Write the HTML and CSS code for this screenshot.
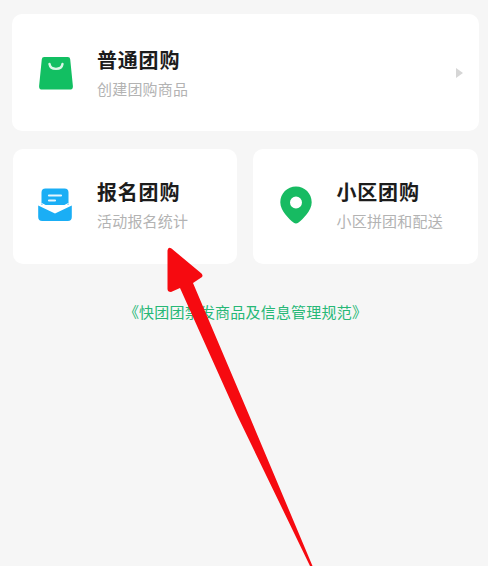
FILE: index.html
```html
<!DOCTYPE html>
<html lang="zh">
<head>
<meta charset="utf-8">
<title>快团团</title>
<link rel="stylesheet" href="styles.css">
</head>
<body>
<main class="page">
  <section class="card card-wide">
    <svg class="icon" viewBox="0 0 34 34" aria-hidden="true">
      <path d="M5.200 1h23.600a2.400 2.400 0 0 1 2.400 2.200L33.900 30a3.400 3.400 0 0 1-3.400 3.600H3.500A3.400 3.400 0 0 1 .1 30L2.800 3.200A2.400 2.400 0 0 1 5.200 1z" fill="#12bf62"/>
      <path d="M10.500 8c1 6.500 12 6.500 13 0" fill="none" stroke="#d9f7e6" stroke-width="2.400" stroke-linecap="round"/>
    </svg>
    <div class="copy">
      <h2 class="title">普通团购</h2>
      <p class="sub">创建团购商品</p>
    </div>
    <span class="chevron"></span>
  </section>
  <div class="row">
    <section class="card">
      <svg class="icon" viewBox="0 0 34 34" aria-hidden="true">
        <path d="M7.500 .5h19a4 4 0 0 1 4 4v12.500H3.500V4.500a4 4 0 0 1 4-4z" fill="#1aaef5"/>
        <path d="M.2 17.500 17 25.500l16.800-8V29a4 4 0 0 1-4 4H4.200a4 4 0 0 1-4-4z" fill="#1aaef5"/>
        <path d="M3.500 15.500 17 22.500l13.500-7" fill="none" stroke="#fff" stroke-width="1.200"/>
        <path d="M11 7.500h12M11 12.500h6" fill="none" stroke="#e6f6fe" stroke-width="2.200" stroke-linecap="round"/>
      </svg>
      <div class="copy">
        <h2 class="title">报名团购</h2>
        <p class="sub">活动报名统计</p>
      </div>
    </section>
    <section class="card">
      <svg class="icon pin" viewBox="0 0 32 38" aria-hidden="true">
        <path fill-rule="evenodd" d="M16 .5C7.200.5.300 7.500.300 16.200c0 8.600 8.700 16.600 13.500 20.600 1.300 1 3.100 1 4.400 0 4.800-4 13.500-12 13.500-20.600C31.700 7.500 24.800.5 16 .5zm0 10a6 6 0 1 1 0 12 6 6 0 0 1 0-12z" fill="#17bb62"/>
      </svg>
      <div class="copy">
        <h2 class="title">小区团购</h2>
        <p class="sub">小区拼团和配送</p>
      </div>
    </section>
  </div>
  <p class="policy">《快团团禁发商品及信息管理规范》</p>
</main>
<svg class="arrow" viewBox="0 0 488 566" aria-hidden="true">
  <path d="M167.500 250.500 Q168 246.500 171.500 248.500 L201.500 273.500 Q204 276.500 200.500 278 L193 283 L249 415 L312.500 566 L310 566 L237 415 L180 288 L171 292 Q167.500 292 167.500 289 Z" fill="#f60a10"/>
</svg>
</body>
</html>
```
FILE: styles.css
```css
* { box-sizing: border-box; }
html, body { margin: 0; padding: 0; }
body {
  width: 488px;
  height: 566px;
  overflow: hidden;
  background: #f6f6f6;
  font-family: "Noto Sans CJK SC", "Noto Sans", sans-serif;
}
.page {
  display: flex;
  flex-direction: column;
  gap: 18px;
  padding: 14px 9px 0 12px;
}
.row {
  display: flex;
  gap: 16px;
  padding-left: 1px;
  margin-right: 1px;
}
.row .card { flex: 1 1 0; height: 115px; padding-bottom: 4px; }
.card {
  position: relative;
  display: flex;
  align-items: center;
  background: #fff;
  border-radius: 10px;
  padding-left: 25px;
}
.card-wide { height: 117px; padding-left: 27px; }
.row .card + .card { padding-left: 27px; }
.icon { width: 34px; height: 34px; flex: none; margin-right: 25px; }
.card-wide .icon { margin-right: 24px; }
.pin { width: 32px; height: 38px; margin-right: 25px; }
.copy { display: flex; flex-direction: column; gap: 6px; }
.title {
  margin: 0;
  font-size: 20px;
  line-height: 26px;
  font-weight: 700;
  color: #1c1c1c;
  letter-spacing: .8px;
}
.sub {
  margin: 0;
  font-size: 15px;
  line-height: 20px;
  letter-spacing: .2px;
  color: #b3b3b3;
}
.chevron {
  position: absolute;
  right: 16px;
  top: 54px;
  border-left: 7px solid #d6d6d6;
  border-top: 5px solid transparent;
  border-bottom: 5px solid transparent;
}
.policy {
  margin: 20px 0 0;
  text-align: center;
  font-size: 15px;
  line-height: 20px;
  letter-spacing: .2px;
  color: #27b876;
}
.arrow {
  position: absolute;
  left: 0;
  top: 0;
  width: 488px;
  height: 566px;
  pointer-events: none;
}
```
